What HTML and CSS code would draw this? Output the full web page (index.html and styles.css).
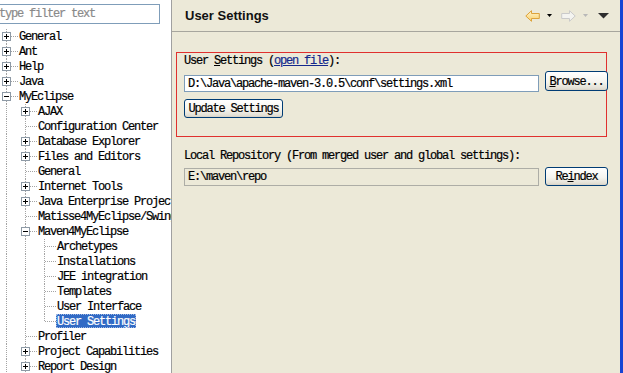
FILE: index.html
```html
<!DOCTYPE html>
<html>
<head>
<meta charset="utf-8">
<link rel="stylesheet" href="styles.css">
</head>
<body>
<aside class="nav">
  <div class="filter">type filter text</div>
  <ul class="tree">
    <li class="row"><span class="cell tee"><span class="exp plus"></span></span><span class="label">General</span></li>
    <li class="row"><span class="cell tee"><span class="exp plus"></span></span><span class="label">Ant</span></li>
    <li class="row"><span class="cell tee"><span class="exp plus"></span></span><span class="label">Help</span></li>
    <li class="row"><span class="cell tee"><span class="exp plus"></span></span><span class="label">Java</span></li>
    <li class="row"><span class="cell tee"><span class="exp minus"></span></span><span class="label">MyEclipse</span></li>
    <li class="row"><span class="cell pipe"></span><span class="cell tee"><span class="exp plus"></span></span><span class="label">AJAX</span></li>
    <li class="row"><span class="cell pipe"></span><span class="cell tee"></span><span class="label">Configuration Center</span></li>
    <li class="row"><span class="cell pipe"></span><span class="cell tee"><span class="exp plus"></span></span><span class="label">Database Explorer</span></li>
    <li class="row"><span class="cell pipe"></span><span class="cell tee"><span class="exp plus"></span></span><span class="label">Files and Editors</span></li>
    <li class="row"><span class="cell pipe"></span><span class="cell tee"></span><span class="label">General</span></li>
    <li class="row"><span class="cell pipe"></span><span class="cell tee"><span class="exp plus"></span></span><span class="label">Internet Tools</span></li>
    <li class="row"><span class="cell pipe"></span><span class="cell tee"><span class="exp plus"></span></span><span class="label">Java Enterprise Project Facets</span></li>
    <li class="row"><span class="cell pipe"></span><span class="cell tee"></span><span class="label">Matisse4MyEclipse/Swing</span></li>
    <li class="row"><span class="cell pipe"></span><span class="cell tee"><span class="exp minus"></span></span><span class="label">Maven4MyEclipse</span></li>
    <li class="row"><span class="cell pipe"></span><span class="cell pipe"></span><span class="cell tee"></span><span class="label">Archetypes</span></li>
    <li class="row"><span class="cell pipe"></span><span class="cell pipe"></span><span class="cell tee"></span><span class="label">Installations</span></li>
    <li class="row"><span class="cell pipe"></span><span class="cell pipe"></span><span class="cell tee"></span><span class="label">JEE integration</span></li>
    <li class="row"><span class="cell pipe"></span><span class="cell pipe"></span><span class="cell tee"></span><span class="label">Templates</span></li>
    <li class="row"><span class="cell pipe"></span><span class="cell pipe"></span><span class="cell tee"></span><span class="label">User Interface</span></li>
    <li class="row"><span class="cell pipe"></span><span class="cell pipe"></span><span class="cell elbow"></span><span class="label selected">User Settings</span></li>
    <li class="row"><span class="cell pipe"></span><span class="cell tee"></span><span class="label">Profiler</span></li>
    <li class="row"><span class="cell pipe"></span><span class="cell tee"><span class="exp plus"></span></span><span class="label">Project Capabilities</span></li>
    <li class="row"><span class="cell pipe"></span><span class="cell tee"><span class="exp plus"></span></span><span class="label">Report Design</span></li>
  </ul>
</aside>

<main class="page">
  <header class="page-head">
    <h1 class="page-title">User Settings</h1>
    <div class="page-tools">
      <svg class="tool-arrow" width="15" height="12" viewBox="0 0 15 12">
        <defs>
          <linearGradient id="backFill" x1="0" y1="0" x2="0" y2="1">
            <stop offset="0" stop-color="#FFF6CF"/>
            <stop offset="1" stop-color="#F9CF6A"/>
          </linearGradient>
        </defs>
        <path d="M0.8 6 L6.5 0.7 V3.5 H14.3 V8.5 H6.5 V11.3 Z" fill="url(#backFill)" stroke="#DDA23A" stroke-linejoin="round"/>
      </svg>
      <svg class="tool-caret" width="5" height="3" viewBox="0 0 5 3"><path d="M0 0H5L2.5 3Z" fill="#000"/></svg>
      <svg class="tool-arrow fwd" width="15" height="12" viewBox="0 0 15 12">
        <path d="M14.2 6 L8.5 0.7 V3.5 H0.7 V8.5 H8.5 V11.3 Z" fill="#F4F4F0" stroke="#CACACA" stroke-linejoin="round"/>
      </svg>
      <svg class="tool-caret dim" width="5" height="3" viewBox="0 0 5 3"><path d="M0 0H5L2.5 3Z" fill="#B8B8B8"/></svg>
      <svg class="tool-menu" width="11" height="6" viewBox="0 0 11 6"><path d="M0 0H11L5.5 5.5Z" fill="#2E2E2E"/></svg>
    </div>
  </header>

  <section class="settings">
    <div class="mark"></div>
    <p class="field-label">User <u>S</u>ettings (<a class="link">open file</a>):</p>
    <div class="field-row">
      <div class="textbox">D:\Java\apache-maven-3.0.5\conf\settings.xml</div>
      <button class="btn btn-side"><u>B</u>rowse...</button>
    </div>
    <button class="btn btn-update">Update Settings</button>
  </section>

  <section class="repo">
    <p class="field-label">Local Repository (From merged user and global settings):</p>
    <div class="field-row repo-row">
      <div class="textbox readonly">E:\maven\repo</div>
      <button class="btn btn-side btn-reindex">Re<u>i</u>ndex</button>
    </div>
  </section>
</main>

<div class="frame-edge"></div>
</body>
</html>
```

FILE: styles.css
```css
* { box-sizing: border-box; }

html, body {
  margin: 0;
  padding: 0;
}

body {
  width: 623px;
  height: 373px;
  overflow: hidden;
  display: flex;
  background: #ECE9D8;
  color: #000;
  font-family: "Liberation Mono", "DejaVu Sans Mono", monospace;
  font-size: 12px;
  letter-spacing: -1.2px;
  -webkit-text-stroke: 0.2px currentColor;
}

/* ---------- left navigation ---------- */
.nav {
  width: 172px;
  flex: none;
  background: #fff;
  border-right: 1px solid #A0A0A0;
  overflow: hidden;
}

.filter {
  margin: 4px 0 0 -6px;
  width: 166px;
  height: 20px;
  border: 1px solid #7F9DB9;
  padding-left: 4px;
  line-height: 19px;
  color: #8A8A8A;
  white-space: nowrap;
}

.tree {
  --dot: #A4A4A4;
  --v: repeating-linear-gradient(to bottom, var(--dot) 0 1px, transparent 1px 2px);
  --h: repeating-linear-gradient(to right, var(--dot) 0 1px, transparent 1px 2px);
  list-style: none;
  margin: 5px 0 0 0;
  padding: 0;
}

.row {
  display: flex;
  align-items: flex-start;
  height: 15px;
  white-space: nowrap;
}

.cell {
  width: 19px;
  height: 15px;
  flex: none;
  display: flex;
  align-items: center;
  background-repeat: no-repeat;
}

.pipe {
  background-image: var(--v);
  background-size: 1px 15px;
  background-position: 6px 0;
}

.tee {
  background-image: var(--v), var(--h);
  background-size: 1px 15px, 12px 1px;
  background-position: 6px 0, 7px 7px;
}

.elbow {
  background-image: var(--v), var(--h);
  background-size: 1px 8px, 12px 1px;
  background-position: 6px 0, 7px 7px;
}

.exp {
  width: 9px;
  height: 9px;
  margin-left: 2px;
  border: 1px solid #8E9AA6;
  background-color: #fff;
  background-repeat: no-repeat;
}

.exp.plus {
  background-image: linear-gradient(#000, #000), linear-gradient(#000, #000);
  background-size: 5px 1px, 1px 5px;
  background-position: 1px 3px, 3px 1px;
}

.exp.minus {
  background-image: linear-gradient(#000, #000);
  background-size: 5px 1px;
  background-position: 1px 3px;
}

.label {
  margin-left: -1px;
  padding: 0 1px;
  height: 14px;
  line-height: 16px;
}

.label.selected {
  background: #316AC5;
  color: #fff;
  outline: 1px dotted #9DB7E4;
  outline-offset: -1px;
}

/* ---------- right page ---------- */
.page {
  flex: 1;
  display: flex;
  flex-direction: column;
  min-width: 0;
}

.page-head {
  height: 32px;
  flex: none;
  display: flex;
  align-items: center;
  justify-content: space-between;
  padding: 0 11px 1px 13px;
  border-bottom: 1px solid #A7A69E;
}

.page-title {
  margin: 0;
  font-family: "Liberation Sans", Arial, sans-serif;
  font-size: 13px;
  font-weight: bold;
  letter-spacing: 0;
  -webkit-text-stroke: 0;
  color: #111;
}

.page-tools {
  display: flex;
  align-items: center;
  padding-top: 1px;
}

.tool-caret { margin-left: 7px; }
.tool-arrow.fwd { margin-left: 9px; }
.tool-menu { margin-left: 10px; }

.settings {
  position: relative;
  padding: 22px 12px 0 12px;
}

.mark {
  position: absolute;
  left: 4px;
  top: 20px;
  width: 431px;
  height: 85px;
  border: 1px solid #E0302E;
  pointer-events: none;
}

.field-label {
  margin: 0;
  height: 13px;
  line-height: 15px;
  white-space: nowrap;
}

.link {
  color: #13288C;
  text-decoration: underline;
}

.field-row {
  display: flex;
  align-items: flex-start;
  gap: 6px;
  margin-top: 4px;
}

.textbox {
  flex: 1;
  height: 17px;
  margin-top: 4px;
  border: 1px solid #7F9DB9;
  background: #fff;
  padding-left: 3px;
  line-height: 16px;
  white-space: nowrap;
  overflow: hidden;
}

.textbox.readonly {
  height: 18px;
  margin-top: 1px;
  line-height: 17px;
  background: #ECE9D8;
  border-color: #ADADA6;
}

.btn {
  position: relative;
  display: block;
  margin: 0;
  padding: 1px 0 0 0;
  border: 1px solid #003C74;
  border-radius: 3px;
  background: linear-gradient(to bottom, #FFFFFF 0%, #F5F4EF 55%, #E3E0D5 90%, #D6D0C5 100%);
  font: inherit;
  letter-spacing: inherit;
  color: #000;
  text-align: center;
  white-space: nowrap;
}

.btn-side {
  width: 63px;
  height: 20px;
  flex: none;
}

.btn-update {
  width: 99px;
  height: 19px;
  margin-top: 7px;
}

.repo {
  padding: 31px 12px 0 12px;
}

.repo-row {
  margin-top: 5px;
}

.btn-reindex {
  height: 19px;
}

.frame-edge {
  width: 3px;
  flex: none;
  background: #1544D4;
}
```
